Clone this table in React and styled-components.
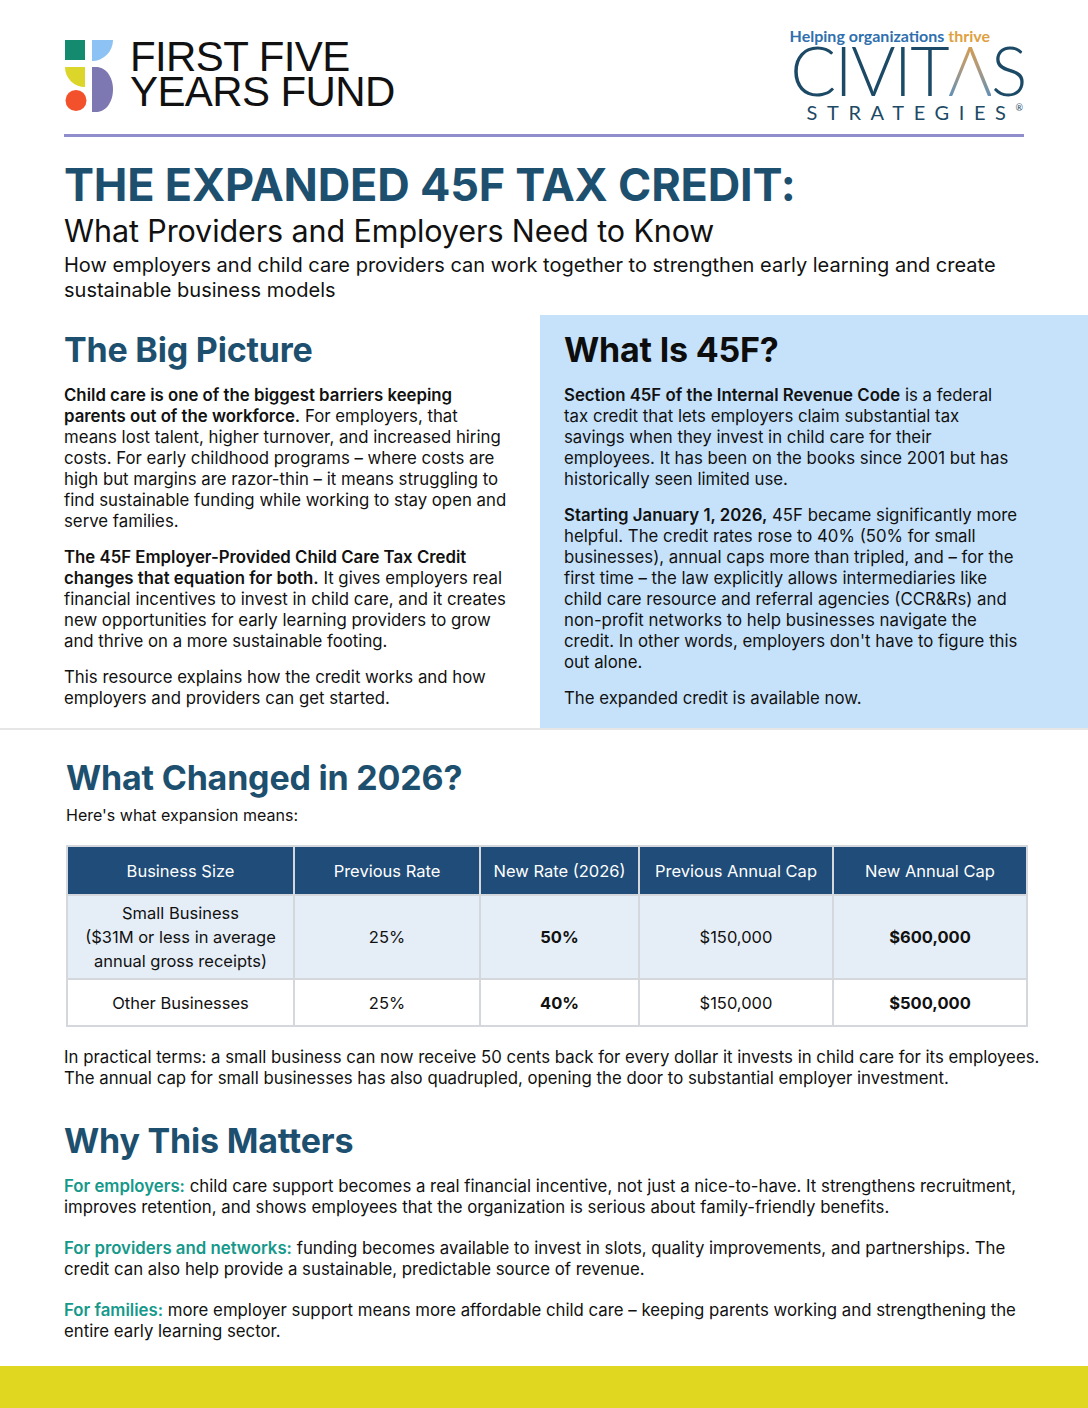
import React from 'react';
import styled, { createGlobalStyle } from 'styled-components';

const GlobalStyle = createGlobalStyle`
  body {
    margin: 0;
    font-family: 'Inter', 'Lato', 'Liberation Sans', sans-serif;
    color: #111;
    background: #fff;
  }
`;

const rows = [
  {
    size: ['Small Business', '($31M or less in average', 'annual gross receipts)'],
    prevRate: '25%',
    newRate: '50%',
    prevCap: '$150,000',
    newCap: '$600,000',
    shaded: true,
  },
  {
    size: ['Other Businesses'],
    prevRate: '25%',
    newRate: '40%',
    prevCap: '$150,000',
    newCap: '$500,000',
    shaded: false,
  },
];

const FfyfMark = () => (
  <svg width="50" height="74" viewBox="64 39 50 74">
    <rect x="65" y="40" width="20" height="20" fill="#148a6e" />
    <path d="M92 40 H113 A21 21 0 0 1 92 61 Z" fill="#8cc2f4" />
    <path d="M65 67 H85 V87 A20 20 0 0 1 65 67 Z" fill="#ddd62a" />
    <circle cx="76" cy="100.5" r="10.5" fill="#f2512b" />
    <path d="M92 67 H96 C106 67 113 77 113 89.5 C113 102 106 112 96 112 H92 Z" fill="#7d78b2" />
  </svg>
);

const App = () => {
  return (
    <>
      <GlobalStyle />
      <Page>
        <Header>
          <Brand>
            <FfyfMark />
            <BrandName>
              <span>FIRST FIVE</span>
              <span>YEARS FUND</span>
            </BrandName>
          </Brand>
          <Civitas>
            <Tagline>
              Helping organizations <Thrive>thrive</Thrive>
            </Tagline>
            <CivitasWord>
              CIVIT<Lambda>Λ</Lambda>S
            </CivitasWord>
            <Strategies>STRATEGIES<sup>®</sup></Strategies>
          </Civitas>
        </Header>
        <Divider />

        <Intro>
          <Title>THE EXPANDED 45F TAX CREDIT:</Title>
          <Subtitle>What Providers and Employers Need to Know</Subtitle>
          <Lead>
            How employers and child care providers can work together to strengthen early learning and create
            sustainable business models
          </Lead>
        </Intro>

        <TwoCol>
          <LeftCol>
            <SectionHeading>The Big Picture</SectionHeading>
            <Para>
              <b>Child care is one of the biggest barriers keeping parents out of the workforce.</b> For employers, that
              means lost talent, higher turnover, and increased hiring costs. For early childhood programs – where costs
              are high but margins are razor-thin – it means struggling to find sustainable funding while working to stay
              open and serve families.
            </Para>
            <Para>
              <b>The 45F Employer-Provided Child Care Tax Credit changes that equation for both.</b> It gives employers
              real financial incentives to invest in child care, and it creates new opportunities for early learning
              providers to grow and thrive on a more sustainable footing.
            </Para>
            <Para>
              This resource explains how the credit works and how employers and providers can get started.
            </Para>
          </LeftCol>
          <Panel>
            <SectionHeading $dark>What Is 45F?</SectionHeading>
            <Para>
              <b>Section 45F of the Internal Revenue Code</b> is a federal tax credit that lets employers claim
              substantial tax savings when they invest in child care for their employees. It has been on the books since
              2001 but has historically seen limited use.
            </Para>
            <Para>
              <b>Starting January 1, 2026,</b> 45F became significantly more helpful. The credit rates rose to 40% (50%
              for small businesses), annual caps more than tripled, and – for the first time – the law explicitly allows
              intermediaries like child care resource and referral agencies (CCR&amp;Rs) and non-profit networks to help
              businesses navigate the credit. In other words, employers don't have to figure this out alone.
            </Para>
            <Para>The expanded credit is available now.</Para>
          </Panel>
        </TwoCol>

        <Changes>
          <SectionHeading $tight>What Changed in 2026?</SectionHeading>
          <Note>Here's what expansion means:</Note>
          <Table>
            <colgroup>
              <col style={{ width: 227 }} />
              <col style={{ width: 186 }} />
              <col style={{ width: 159 }} />
              <col style={{ width: 194 }} />
              <col style={{ width: 194 }} />
            </colgroup>
            <thead>
              <tr>
                <Th>Business Size</Th>
                <Th>Previous Rate</Th>
                <Th>New Rate (2026)</Th>
                <Th>Previous Annual Cap</Th>
                <Th>New Annual Cap</Th>
              </tr>
            </thead>
            <tbody>
              {rows.map(row => (
                <Tr key={row.size[0]} $shaded={row.shaded}>
                  <Td>
                    {row.size.map(line => (
                      <div key={line}>{line}</div>
                    ))}
                  </Td>
                  <Td>{row.prevRate}</Td>
                  <Td $bold>{row.newRate}</Td>
                  <Td>{row.prevCap}</Td>
                  <Td $bold>{row.newCap}</Td>
                </Tr>
              ))}
            </tbody>
          </Table>
        </Changes>

        <Matters>
          <Para>
            In practical terms: a small business can now receive 50 cents back for every dollar it invests in child care
            for its employees. The annual cap for small businesses has also quadrupled, opening the door to substantial
            employer investment.
          </Para>
          <MattersHeading>Why This Matters</MattersHeading>
          <Para $gap>
            <Label>For employers:</Label> child care support becomes a real financial incentive, not just a
            nice-to-have. It strengthens recruitment, improves retention, and shows employees that the organization is
            serious about family-friendly benefits.
          </Para>
          <Para $gap>
            <Label>For providers and networks:</Label> funding becomes available to invest in slots, quality
            improvements, and partnerships. The credit can also help provide a sustainable, predictable source of
            revenue.
          </Para>
          <Para $gap>
            <Label>For families:</Label> more employer support means more affordable child care – keeping parents
            working and strengthening the entire early learning sector.
          </Para>
        </Matters>

        <FooterBar />
      </Page>
    </>
  );
};
export default App;

const Page = styled.div`
  width: 1088px;
  min-height: 1408px;
  display: flex;
  flex-direction: column;
  overflow: hidden;
`;

const Header = styled.header`
  display: flex;
  justify-content: space-between;
  align-items: flex-start;
  height: 134px;
  padding: 27px 64px 0 64px;
  box-sizing: border-box;
`;

const Brand = styled.div`
  display: flex;
  align-items: flex-start;
  gap: 16px;
  margin-top: 12px;
`;

const BrandName = styled.div`
  display: flex;
  flex-direction: column;
  font-family: 'Liberation Sans', 'Noto Sans', sans-serif;
  font-size: 42px;
  line-height: 35px;
  letter-spacing: -0.6px;
  color: #111;
`;

const Civitas = styled.div`
  display: flex;
  flex-direction: column;
  align-items: flex-end;
  color: #1c4a66;
  font-family: 'Lato', 'Liberation Sans', sans-serif;
`;

const Tagline = styled.div`
  font-size: 16px;
  font-weight: 700;
  color: #2f6fae;
  margin-right: 34px;
  line-height: 18px;
`;

const Thrive = styled.span`
  color: #dea13f;
`;

const CivitasWord = styled.div`
  font-size: 68px;
  font-weight: 300;
  line-height: 58px;
  letter-spacing: -1.5px;
  margin-top: -4px;
  margin-right: -2px;
`;

const Lambda = styled.span`
  background: linear-gradient(180deg, #eaa030 0%, #b59a78 45%, #3f8bd0 100%);
  -webkit-background-clip: text;
  background-clip: text;
  color: transparent;
  font-family: 'Lato', 'DejaVu Sans', sans-serif;
`;

const Strategies = styled.div`
  font-size: 20px;
  letter-spacing: 9.6px;
  line-height: 22px;
  margin-top: -2px;
  margin-right: 1px;

  sup {
    font-size: 9px;
    letter-spacing: 0;
    vertical-align: 9px;
  }
`;

const Divider = styled.div`
  height: 3px;
  margin: 0 64px;
  background: #8f8dcb;
`;

const Intro = styled.section`
  padding: 19px 64px 0 64px;
`;

const Title = styled.h1`
  margin: 0;
  font-size: 45px;
  font-weight: 700;
  line-height: 57px;
  color: #1d4f6f;
  letter-spacing: -0.2px;
`;

const Subtitle = styled.div`
  font-size: 30.5px;
  line-height: 36px;
  letter-spacing: -0.1px;
`;

const Lead = styled.p`
  margin: 4px 0 0 0;
  font-size: 20px;
  line-height: 25px;
`;

const TwoCol = styled.section`
  display: grid;
  grid-template-columns: 540px 1fr;
  margin-top: 12px;
  border-bottom: 2px solid #e6e6e6;
`;

const LeftCol = styled.div`
  padding: 14px 30px 19px 64px;
`;

const Panel = styled.div`
  background: #c6e2fb;
  padding: 14px 69px 19px 24px;
`;

const SectionHeading = styled.h2`
  margin: 0 0 ${props => (props.$tight ? '6px' : '14px')} 0;
  font-size: 34px;
  font-weight: 700;
  line-height: 42px;
  letter-spacing: -0.2px;
  color: ${props => (props.$dark ? '#0d0d0d' : '#1d4f6f')};
`;

const Para = styled.p`
  margin: 0 0 ${props => (props.$gap ? '20px' : '15px')} 0;
  font-size: 16.8px;
  line-height: 21px;

  b {
    font-weight: 600;
  }

  &:last-child {
    margin-bottom: 0;
  }
`;

const Changes = styled.section`
  padding: 27px 62px 0 66px;
`;

const Note = styled.div`
  font-size: 16px;
  line-height: 20px;
  margin-bottom: 20px;
`;

const Table = styled.table`
  width: 960px;
  border-collapse: collapse;
  table-layout: fixed;
  border: 2px solid #d4d7db;
`;

const Th = styled.th`
  background: #1f4c78;
  color: #fff;
  font-weight: 400;
  font-size: 16.5px;
  height: 47px;
  padding: 0 6px;
  border: 2px solid #d4d7db;
  text-align: center;
`;

const Tr = styled.tr`
  height: 47px;
  background: ${props => (props.$shaded ? '#e5eef7' : '#fff')};
`;

const Td = styled.td`
  border: 2px solid #d4d7db;
  text-align: center;
  font-size: 16.5px;
  line-height: 24px;
  padding: 5px 6px;
  vertical-align: middle;
  font-weight: ${props => (props.$bold ? 700 : 400)};
`;

const Matters = styled.section`
  padding: 20px 44px 0 64px;
`;

const MattersHeading = styled.h2`
  margin: 31px 0 14px 0;
  font-size: 34px;
  font-weight: 700;
  line-height: 42px;
  letter-spacing: -0.2px;
  color: #1d4f6f;
`;

const Label = styled.span`
  color: #15998a;
  font-weight: 600;
`;

const FooterBar = styled.div`
  margin-top: auto;
  height: 42px;
  background: #e0d820;
`;
